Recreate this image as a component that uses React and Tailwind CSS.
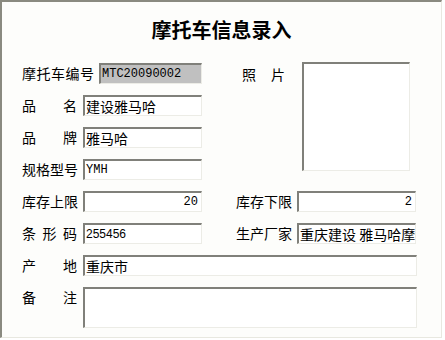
import React from 'react';

const cjk = "font-['Noto_Sans_CJK_SC',sans-serif]";
const mono = "font-['Liberation_Mono','Noto_Sans_CJK_SC',monospace] text-[12px]";

function Field({ value, w = 'w-[119px]', gray, right, font = `${cjk} text-[14px]`, h = 'h-[21px]' }) {
  return (
    <div
      className={`${w} ${h} shrink-0 overflow-hidden whitespace-nowrap border-t-2 border-l-2 border-t-[#80807a] border-l-[#80807a] border-b border-r border-b-[#ecece6] border-r-[#ecece6] ${gray ? 'bg-[#c0c0c0]' : 'bg-white'} ${right ? 'text-right pr-[3px]' : 'pl-[1px]'} ${font} leading-[18px] text-black`}
    >
      {value}
    </div>
  );
}

function Label({ chars, w = 'w-[55px]' }) {
  return (
    <div className={`${w} shrink-0 flex justify-between text-[14px] leading-[20px] text-black`}>
      {chars.map((c, i) => (
        <span key={i}>{c}</span>
      ))}
    </div>
  );
}

export default function App() {
  return (
    <div className={`w-[445px] h-[340px] bg-white ${cjk}`}>
      <div className="w-[442px] h-[338px] bg-[#fdfdfb] border-t-2 border-l-2 border-r border-b border-t-[#8a8a80] border-l-[#8a8a80] border-r-[#e8e8e0] border-b-[#e8e8e0]">
        {/* Title */}
        <h1 className="pt-[16px] h-[61px] text-center text-[20px] font-bold leading-[24px] text-black">
          摩托车信息录入
        </h1>

        <div className="pl-[20px] flex flex-col gap-[12px]">
          {/* Upper section with photo */}
          <div className="flex">
            <div className="flex flex-col gap-[12px]">
              <div className="flex items-center h-[20px]">
                <div className="text-[14px] leading-[20px] tracking-[0.5px] w-[77px] shrink-0">摩托车编号</div>
                <Field value="MTC20090002" gray w="w-[103px]" font={mono} />
              </div>
              <div className="flex items-center gap-[6px] h-[20px]">
                <Label chars={['品', '名']} />
                <Field value="建设雅马哈" />
              </div>
              <div className="flex items-center gap-[6px] h-[20px]">
                <Label chars={['品', '牌']} />
                <Field value="雅马哈" />
              </div>
              <div className="flex items-center gap-[6px] h-[20px]">
                <Label chars={['规', '格', '型', '号']} />
                <Field value="YMH" font={mono} />
              </div>
            </div>
            <div className="ml-[40px] mt-[1px] flex items-start">
              <Label chars={['照', '片']} w="w-[43px]" />
              <div className="ml-[17px] -mt-[2px] w-[108px] h-[109px] bg-white border-t-2 border-l-2 border-t-[#80807a] border-l-[#80807a] border-b border-r border-b-[#ecece6] border-r-[#ecece6]" />
            </div>
          </div>

          {/* Stock limits */}
          <div className="flex items-center h-[20px]">
            <div className="flex items-center gap-[6px]">
              <Label chars={['库', '存', '上', '限']} />
              <Field value="20" right font={mono} />
            </div>
            <div className="ml-[34px] flex items-center gap-[6px]">
              <Label chars={['库', '存', '下', '限']} />
              <Field value="2" right font={mono} />
            </div>
          </div>

          {/* Barcode / maker */}
          <div className="flex items-center h-[20px]">
            <div className="flex items-center gap-[6px]">
              <Label chars={['条', '形', '码']} />
              <Field value="255456" font="font-['Liberation_Sans',sans-serif] text-[12px]" />
            </div>
            <div className="ml-[34px] flex items-center gap-[6px]">
              <Label chars={['生', '产', '厂', '家']} />
              <Field value="重庆建设 雅马哈摩" />
            </div>
          </div>

          {/* Origin */}
          <div className="flex items-center gap-[6px] h-[20px]">
            <Label chars={['产', '地']} />
            <Field value="重庆市" w="w-[334px]" />
          </div>

          {/* Notes */}
          <div className="flex items-start gap-[6px]">
            <Label chars={['备', '注']} />
            <Field value="" w="w-[334px]" h="h-[41px]" />
          </div>
        </div>
      </div>
    </div>
  );
}
